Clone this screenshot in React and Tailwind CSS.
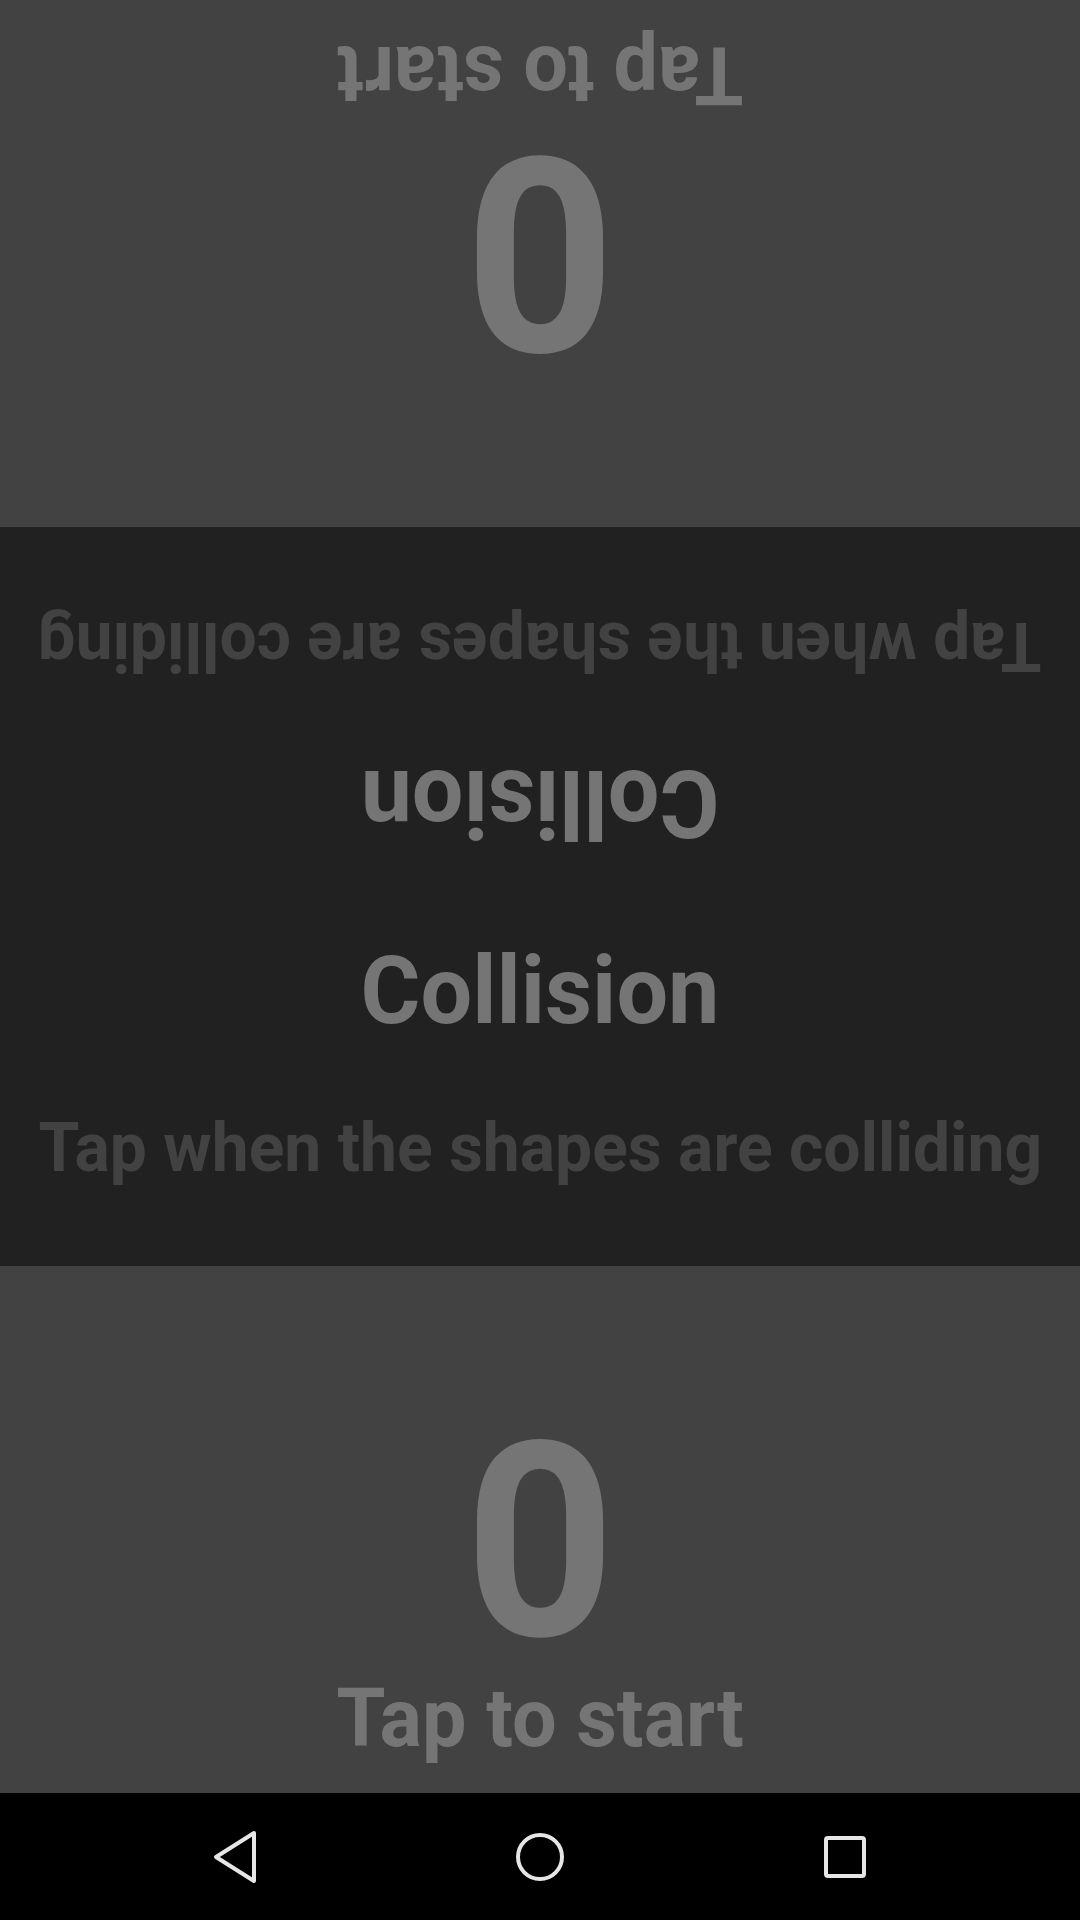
import React from "react";

const font = { fontFamily: "Roboto, 'Noto Sans', sans-serif" };

const ScorePanel = ({ flipped }) => (
  <div className="h-[527px] bg-[#424242] overflow-hidden">
    <div
      className={`h-full flex flex-col items-center pt-[142px] ${
        flipped ? "rotate-180" : ""
      }`}
    >
      <div className="h-[268px] text-[272px] leading-[268px] font-bold text-[#757575] scale-x-[0.965]">
        0
      </div>
      <div className="mt-[1px] text-[82px] leading-none font-bold text-[#757575] scale-x-[0.965]">
        Tap to start
      </div>
    </div>
  </div>
);

const TitleHalf = ({ flipped }) => (
  <div
    className={`h-[369.5px] flex flex-col items-center pt-[46px] ${
      flipped ? "rotate-180" : ""
    }`}
  >
    <div className="text-[95px] leading-none font-bold text-[#757575] scale-x-[0.965]">
      Collision
    </div>
    <div className="mt-[76px] text-[68px] leading-none font-bold text-[#424242] whitespace-nowrap scale-x-[0.97]">
      Tap when the shapes are colliding
    </div>
  </div>
);

const NavBar = () => (
  <div className="h-[127px] bg-black flex items-center justify-center gap-[185px]">
    <div className="w-[120px] flex justify-center">
      {/* back */}
      <svg width="46" height="54" viewBox="0 0 46 54" fill="none">
        <path
          d="M42 3 L4 27 L42 51 Z"
          stroke="#e6e6e6"
          strokeWidth="4"
          strokeLinejoin="round"
        />
      </svg>
    </div>
    <div className="w-[120px] flex justify-center">
      {/* home */}
      <svg width="50" height="50" viewBox="0 0 50 50" fill="none">
        <circle cx="25" cy="25" r="22" stroke="#e6e6e6" strokeWidth="4" />
      </svg>
    </div>
    <div className="w-[120px] flex justify-center">
      {/* recents */}
      <svg width="44" height="44" viewBox="0 0 44 44" fill="none">
        <rect
          x="3"
          y="3"
          width="38"
          height="38"
          rx="2"
          stroke="#e6e6e6"
          strokeWidth="4"
        />
      </svg>
    </div>
  </div>
);

export default function App() {
  return (
    <div className="w-[1080px] h-[1920px] flex flex-col overflow-hidden" style={font}>
      <ScorePanel flipped />
      <div className="h-[739px] bg-[#212121] flex flex-col">
        <TitleHalf flipped />
        <TitleHalf />
      </div>
      <ScorePanel />
      <NavBar />
    </div>
  );
}
